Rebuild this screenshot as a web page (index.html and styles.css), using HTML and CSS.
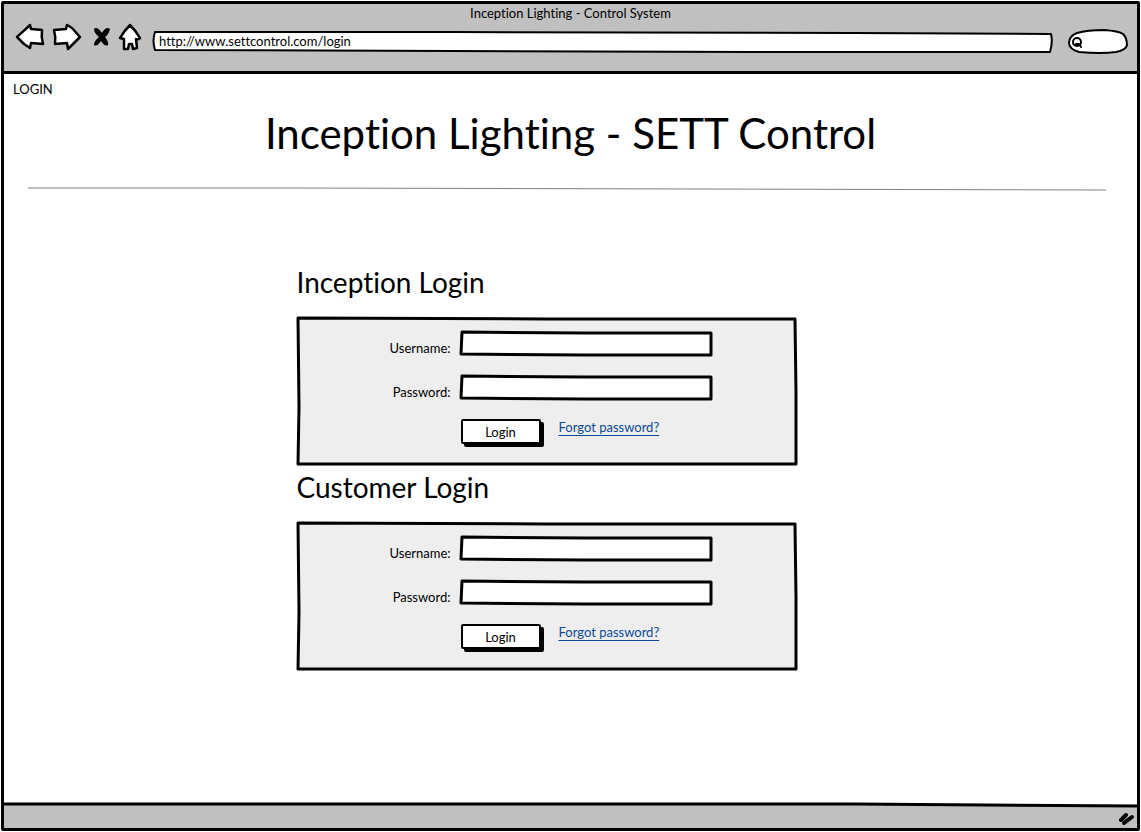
FILE: index.html
```html
<!DOCTYPE html>
<html lang="en">
<head>
<meta charset="utf-8">
<meta name="viewport" content="width=device-width, initial-scale=1">
<title>Inception Lighting - Control System</title>
<link rel="stylesheet" href="styles.css">
</head>
<body>
<div class="window">
  <header class="chrome">
    <div class="chrome-title">Inception Lighting - Control System</div>
    <div class="toolbar">
      <div class="nav-buttons">
        <button class="icon-button" type="button" aria-label="Back">
          <svg width="30" height="28" viewBox="0 0 30 28"><path class="outline" d="M2 14 C7 9 11 6 15 2 L16 6 L27 7 Q26 14 28 21 L16 20 L15 25 L9 21 Z"/></svg>
        </button>
        <button class="icon-button" type="button" aria-label="Forward">
          <svg width="30" height="28" viewBox="0 0 30 28"><path class="outline" d="M2 7 L14 6 L15 2 L20 5 L28 14 Q21 21 16 26 L15 20 L3 21 Q4 14 2 7 Z"/></svg>
        </button>
        <button class="icon-button icon-stop" type="button" aria-label="Stop">
          <svg width="18" height="20" viewBox="0 0 18 20"><path class="solid" d="M1 2 Q4 -1 9 6 Q13 -1 17 2 Q16 7 12 10 Q16 15 15 18 Q12 20 8 14 Q4 20 1 18 Q1 14 6 10 Q1 6 1 2 Z"/></svg>
        </button>
        <button class="icon-button icon-home" type="button" aria-label="Home">
          <svg width="24" height="28" viewBox="0 0 24 28"><path class="outline" d="M12 2 Q18 8 22 15 Q20 17 18 16 L19 25 L15 26 L14 21 L11 21 L10 26 L6 26 L6 16 L2 15 Q6 8 12 2 Z"/></svg>
        </button>
      </div>
      <div class="sketch address">
        <svg class="frame" viewBox="0 0 900 24" preserveAspectRatio="none" aria-hidden="true"><path d="M3 3 L300 3 L700 4 L898 5 Q900 13 897 23 L600 23 L300 22 L3 21 Q0 12 3 3 Z"/></svg>
        <input class="address-input" type="text" aria-label="Address" value="http://www.settcontrol.com/login">
      </div>
      <div class="search">
        <svg class="search-frame" width="62" height="28" viewBox="0 0 62 28" aria-hidden="true"><path class="outline thin" d="M10 5 Q20 2 37 2 Q52 3 56 6 Q60 10 60 17 Q59 22 49 24 Q34 26 12 24 Q2 21 2 15 Q2 8 10 5 Z"/><circle class="lens" cx="10" cy="14" r="4"/><path class="lens" d="M9 16 L12 16 L14 19"/></svg>
        <input class="search-input" type="text" aria-label="Search">
      </div>
    </div>
  </header>

  <main class="page">
    <div class="crumb">LOGIN</div>
    <h1 class="page-title">Inception Lighting - SETT Control</h1>
    <svg class="rule" viewBox="0 0 1080 4" preserveAspectRatio="none" aria-hidden="true"><path d="M0 1 L260 1 L1080 3"/></svg>

    <div class="logins">
      <section class="login">
        <h2 class="login-title">Inception Login</h2>
        <form class="sketch panel">
          <svg class="frame shaded" viewBox="0 0 500 149" preserveAspectRatio="none" aria-hidden="true"><path d="M1 1 L250 2 L498 2 L499 75 L499 147 L250 147 L1 147 L2 90 Z"/></svg>
          <div class="fields">
            <label for="inception-user">Username:</label>
            <div class="sketch field">
              <svg class="frame" viewBox="0 0 254 26" preserveAspectRatio="none" aria-hidden="true"><path d="M3 1 L125 2 L252 2 L252 13 L252 24 L125 24 L2 23 Z"/></svg>
              <input id="inception-user" type="text" autocomplete="username">
            </div>
            <label for="inception-pass">Password:</label>
            <div class="sketch field">
              <svg class="frame" viewBox="0 0 254 26" preserveAspectRatio="none" aria-hidden="true"><path d="M3 1 L125 2 L252 2 L252 13 L252 24 L125 24 L2 23 Z"/></svg>
              <input id="inception-pass" type="password" autocomplete="current-password">
            </div>
            <div class="actions">
              <button class="submit" type="submit">Login</button>
              <a href="#forgot">Forgot password?</a>
            </div>
          </div>
        </form>
      </section>

      <section class="login">
        <h2 class="login-title">Customer Login</h2>
        <form class="sketch panel">
          <svg class="frame shaded" viewBox="0 0 500 149" preserveAspectRatio="none" aria-hidden="true"><path d="M1 1 L250 2 L498 2 L499 75 L499 147 L250 147 L1 147 L2 90 Z"/></svg>
          <div class="fields">
            <label for="customer-user">Username:</label>
            <div class="sketch field">
              <svg class="frame" viewBox="0 0 254 26" preserveAspectRatio="none" aria-hidden="true"><path d="M3 1 L125 2 L252 2 L252 13 L252 24 L125 24 L2 23 Z"/></svg>
              <input id="customer-user" type="text" autocomplete="username">
            </div>
            <label for="customer-pass">Password:</label>
            <div class="sketch field">
              <svg class="frame" viewBox="0 0 254 26" preserveAspectRatio="none" aria-hidden="true"><path d="M3 1 L125 2 L252 2 L252 13 L252 24 L125 24 L2 23 Z"/></svg>
              <input id="customer-pass" type="password" autocomplete="current-password">
            </div>
            <div class="actions">
              <button class="submit" type="submit">Login</button>
              <a href="#forgot">Forgot password?</a>
            </div>
          </div>
        </form>
      </section>
    </div>
  </main>

  <footer class="sketch status">
    <svg class="status-frame" viewBox="0 0 1134 26" preserveAspectRatio="none" aria-hidden="true"><path class="status-fill" d="M0 2 L850 2 L1134 4 V26 H0 Z"/><path class="status-line" d="M0 2 L850 2 L1134 4"/></svg>
    <svg class="grip" width="18" height="16" viewBox="0 0 18 16" aria-hidden="true"><path d="M2 9 L7 4"/><path d="M5 12 L13 6"/></svg>
  </footer>
</div>
</body>
</html>
```

FILE: styles.css
```css
* {
  box-sizing: border-box;
}

body {
  margin: 0;
  background: #fff;
  color: #000;
  font: 13px/16px Lato, "Open Sans", sans-serif;
  font-variant-ligatures: none;
}

input,
button {
  margin: 0;
  padding: 0;
  border: 0;
  background: none;
  color: inherit;
  font: inherit;
}

.window {
  display: flex;
  flex-direction: column;
  min-height: calc(100vh - 2px);
  margin: 1px;
  border: 3px solid #000;
  border-radius: 2px;
}

.chrome {
  height: 70px;
  background: #c0c0c0;
  border-bottom: 3px solid #000;
}

.chrome-title {
  padding-top: 1px;
  text-align: center;
}

.toolbar {
  display: flex;
  align-items: flex-start;
  gap: 14px;
  padding: 2px 8px 0 11px;
}

.nav-buttons {
  display: flex;
  align-items: center;
  gap: 7px;
  height: 28px;
}

.icon-button {
  display: flex;
}

.icon-stop {
  margin-left: 4px;
}

.outline {
  fill: #fff;
  stroke: #000;
  stroke-width: 2.5;
  stroke-linejoin: round;
}

.thin {
  stroke-width: 2;
}

.solid {
  fill: #000;
}

.lens {
  fill: none;
  stroke: #000;
  stroke-width: 2;
  stroke-linecap: round;
}

/* Stacks a stretchy hand-drawn outline and its content in one cell. */
.sketch {
  display: grid;
}

.sketch > * {
  grid-area: 1 / 1;
  min-width: 0;
}

.frame {
  width: 100%;
  height: 100%;
  overflow: visible;
}

.frame path {
  fill: #fff;
  stroke: #000;
  stroke-width: 3;
  stroke-linejoin: round;
  vector-effect: non-scaling-stroke;
}

.shaded path {
  fill: #eee;
}

.address {
  flex: 1;
  height: 24px;
  margin: 6px 0 0 -4px;
}

.address-input {
  padding: 0 7px;
}

.address .frame path {
  stroke-width: 2;
}

.search {
  display: grid;
  width: 62px;
  height: 28px;
  margin-top: 5px;
}

.search > * {
  grid-area: 1 / 1;
}

.search-input {
  width: 36px;
  margin-left: 20px;
}

.page {
  flex: 1;
  padding: 7px 9px 0;
}

.page-title {
  margin: 12px 0 0;
  font-size: 42px;
  line-height: 48px;
  font-weight: 400;
  text-align: center;
}

.rule {
  display: block;
  width: calc(100% - 37px);
  height: 4px;
  margin: 30px 0 0 15px;
}

.rule path {
  fill: none;
  stroke: #808080;
  stroke-width: 1;
  vector-effect: non-scaling-stroke;
}

.logins {
  width: 500px;
  max-width: 100%;
  margin: 72px 0 0 max(0px, calc(50% - 274px));
}

.login-title {
  margin: 0;
  height: 54px;
  padding-top: 3px;
  font-size: 28px;
  line-height: 32px;
  font-weight: 400;
}

.login + .login {
  margin-top: 2px;
}

.panel {
  height: 149px;
}

.fields {
  display: grid;
  grid-template-columns: 154px minmax(0, 254px);
  grid-template-rows: 26px 26px 28px;
  column-gap: 8px;
  row-gap: 18px;
  padding-top: 14px;
}

.fields label {
  padding-top: 9px;
  text-align: right;
}

.field input {
  margin: 3px;
  padding: 0 4px;
}

.actions {
  grid-column: 2;
  display: flex;
  align-items: flex-start;
  gap: 18px;
  padding-left: 2px;
}

.submit {
  width: 80px;
  height: 25px;
  border: 2px solid #000;
  border-radius: 2px;
  background: #fff;
  box-shadow: 3px 3px 0 #000;
}

a {
  color: #0b4a94;
  text-underline-offset: 3px;
}

.status {
  height: 26px;
  justify-items: end;
  align-items: end;
}

.status-frame {
  width: 100%;
  height: 26px;
}

.status-fill {
  fill: #c0c0c0;
}

.status-line {
  fill: none;
  stroke: #000;
  stroke-width: 3;
  vector-effect: non-scaling-stroke;
}

.grip {
  margin-bottom: 1px;
}

.grip path {
  fill: none;
  stroke: #000;
  stroke-width: 4;
  stroke-linecap: round;
}
```
